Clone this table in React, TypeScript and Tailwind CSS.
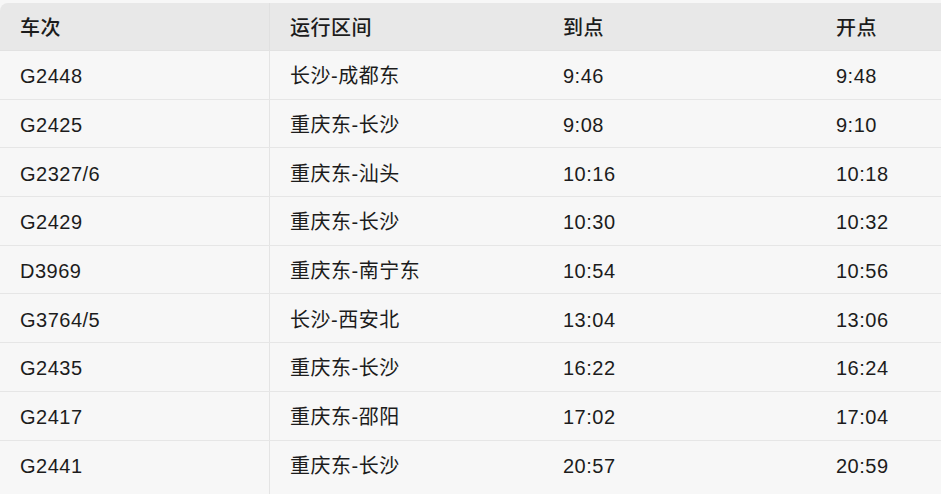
const rows = [
  ["G2448", "长沙-成都东", "9:46", "9:48"],
  ["G2425", "重庆东-长沙", "9:08", "9:10"],
  ["G2327/6", "重庆东-汕头", "10:16", "10:18"],
  ["G2429", "重庆东-长沙", "10:30", "10:32"],
  ["D3969", "重庆东-南宁东", "10:54", "10:56"],
  ["G3764/5", "长沙-西安北", "13:04", "13:06"],
  ["G2435", "重庆东-长沙", "16:22", "16:24"],
  ["G2417", "重庆东-邵阳", "17:02", "17:04"],
  ["G2441", "重庆东-长沙", "20:57", "20:59"],
];

const font = {
  fontFamily: '"Liberation Sans", "Noto Sans CJK SC", sans-serif',
};

export default function App() {
  return (
    <div
      className="w-[941px] h-[494px] flex flex-col bg-[#f7f7f7] pt-[3px] overflow-hidden text-[20px] text-[#1c1c1c] tracking-[0.5px]"
      style={font}
    >
      {/* Header */}
      <div className="grid grid-cols-[270px_273px_273px_1fr] h-[48px] shrink-0 bg-[#e8e8e8] rounded-tl-lg border-b border-[#e2e2e2] font-medium">
        <div className="flex items-center pl-5 pt-[3px] border-r border-[#e0e0e0]">车次</div>
        <div className="flex items-center pl-5 pt-[3px]">运行区间</div>
        <div className="flex items-center pl-5 pt-[3px]">到点</div>
        <div className="flex items-center pl-5 pt-[3px]">开点</div>
      </div>

      {/* Body */}
      {rows.map((r, i) => {
        const last = i === rows.length - 1;
        const cell = last ? "flex items-center pl-5 pt-[3px] pb-[5px]" : "flex items-center pl-5 pt-[3px]";
        return (
          <div
            key={r[0]}
            className={`grid grid-cols-[270px_273px_273px_1fr] ${
              last ? "flex-1" : "h-[48.7px] shrink-0 border-b border-[#e6e6e6]"
            }`}
          >
            <div className={`${cell} border-r border-[#e4e4e4]`}>{r[0]}</div>
            <div className={cell}>{r[1]}</div>
            <div className={cell}>{r[2]}</div>
            <div className={cell}>{r[3]}</div>
          </div>
        );
      })}
    </div>
  );
}
